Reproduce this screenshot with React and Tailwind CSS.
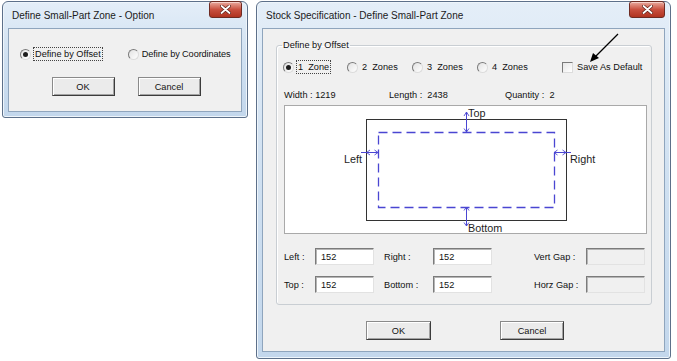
import React from 'react';

// Vista-style close button (red, white X)
function CloseButton({ width }) {
    return (
        <div
            className={`mt-[-1px] h-[17px] ${width} shrink-0 rounded-[3px] border border-[#6e2b22] bg-gradient-to-b from-[#e8a99e] via-[#c9503f] to-[#b0331f] flex items-center justify-center shadow-[inset_0_1px_0_#f4cfc8]`}
        >
            <svg width="11" height="9" viewBox="0 0 11 9">
                <path d="M1.5 1 L9.5 8 M9.5 1 L1.5 8" stroke="#5a1d14" strokeWidth="3.2" strokeLinecap="round" />
                <path d="M1.5 1 L9.5 8 M9.5 1 L1.5 8" stroke="#ffffff" strokeWidth="1.8" strokeLinecap="round" />
            </svg>
        </div>
    );
}

function Window({ title, className, closeWidth, children }) {
    return (
        <div
            className={`relative flex flex-col rounded-t-[6px] rounded-b-[3px] border border-[#5d708a] bg-gradient-to-b from-[#e4eef8] via-[#cfe0f1] to-[#c3d7ec] shadow-[inset_0_0_0_1px_#eef5fb] ${className}`}
        >
            <div className="flex h-[26px] shrink-0 items-start justify-between pl-[9px] pr-[5px]">
                <span className="pt-[8px] text-[10px] leading-[12px] text-[#1b1b1b]">{title}</span>
                <CloseButton width={closeWidth} />
            </div>
            {children}
        </div>
    );
}

function Radio({ checked }) {
    return (
        <span className="inline-flex h-[11px] w-[11px] shrink-0 items-center justify-center rounded-full border border-t-[#7a7a7a] border-l-[#7a7a7a] border-r-[#dcdcdc] border-b-[#dcdcdc] bg-gradient-to-br from-[#e2e2e2] to-[#ffffff]">
            {checked && <span className="h-[5px] w-[5px] rounded-full bg-[#1c1c1c]" />}
        </span>
    );
}

function Checkbox() {
    return (
        <span className="inline-block h-[11px] w-[11px] shrink-0 border border-t-[#7a7a7a] border-l-[#7a7a7a] border-r-[#dcdcdc] border-b-[#dcdcdc] bg-gradient-to-br from-[#e6e6e6] to-[#ffffff]" />
    );
}

function Button({ children, className = '' }) {
    return (
        <div
            className={`flex h-[19px] items-center justify-center border border-t-[#8a8a8a] border-l-[#8a8a8a] border-r-[#3c3c3c] border-b-[#3c3c3c] bg-[#ebebeb] shadow-[inset_1px_1px_0_#ffffff,inset_-1px_-1px_0_#a3a3a3] ${className}`}
        >
            {children}
        </div>
    );
}

function Field({ value, disabled }) {
    return (
        <div
            className={`flex h-[17px] w-[59px] shrink-0 items-center border border-t-[#7b7b7b] border-l-[#7b7b7b] border-r-[#e2e2e2] border-b-[#e2e2e2] px-[5px] shadow-[inset_1px_1px_0_#b5b5b5] ${disabled ? 'bg-[#f0f0f0]' : 'bg-white'}`}
        >
            {value}
        </div>
    );
}

function ZoneDiagram() {
    const blue = '#4a46d2';
    return (
        <svg width="361" height="127" viewBox="0 0 361 127">
            <rect x="81.5" y="13.5" width="200" height="101" fill="none" stroke="#333" strokeWidth="1" />
            <rect x="93.5" y="26.5" width="176" height="75" fill="none" stroke={blue} strokeWidth="1.3" strokeDasharray="9 5" />

            {/* top */}
            <path d="M181.5 6 V26" stroke={blue} strokeWidth="1" />
            <path d="M179 10 L181.5 6 L184 10 M179 22.5 L181.5 26 L184 22.5" stroke={blue} strokeWidth="0.9" fill="none" />
            {/* bottom */}
            <path d="M181.5 101 V120" stroke={blue} strokeWidth="1" />
            <path d="M179 104.5 L181.5 101 L184 104.5 M179 116.5 L181.5 120 L184 116.5" stroke={blue} strokeWidth="0.9" fill="none" />
            {/* left */}
            <path d="M76 46.5 H93" stroke={blue} strokeWidth="1" />
            <path d="M85 44 L81.5 46.5 L85 49 M89.5 44 L93 46.5 L89.5 49" stroke={blue} strokeWidth="0.9" fill="none" />
            {/* right */}
            <path d="M269 46.5 H286" stroke={blue} strokeWidth="1" />
            <path d="M272.5 44 L269 46.5 L272.5 49 M277.5 44 L281 46.5 L277.5 49" stroke={blue} strokeWidth="0.9" fill="none" />

            <g fontFamily="'Liberation Sans', Arial, sans-serif" fontSize="10.8" fill="#1e1e1e">
                <text x="183" y="11">Top</text>
                <text x="59" y="57">Left</text>
                <text x="285" y="57">Right</text>
                <text x="183" y="126">Bottom</text>
            </g>
        </svg>
    );
}

export default function App() {
    return (
        <div className="flex h-[361px] w-[677px] items-start overflow-hidden bg-white font-['Liberation_Sans',Arial,sans-serif] text-[9.2px] leading-[12px] text-[#111]">
            {/* Option dialog */}
            <Window title="Define Small-Part Zone - Option" className="ml-[2px] mt-[1px] h-[117px] w-[246px]" closeWidth="w-[33px]">
                <div className="mx-[5px] mb-[5px] flex flex-1 flex-col border border-[#8fa5bd] bg-[#f0f0f0]">
                    <div className="mt-[18px] flex items-center pl-[11px]">
                        <Radio checked />
                        <span className="ml-[2px] border border-dotted border-[#444] px-[1px]">Define by Offset</span>
                        <span className="ml-[25px] flex items-center">
                            <Radio />
                            <span className="ml-[3px] tracking-[-0.1px]">Define by Coordinates</span>
                        </span>
                    </div>
                    <div className="mt-[16px] flex justify-center gap-[23px] pl-[2px]">
                        <Button className="w-[63px]">OK</Button>
                        <Button className="w-[63px]">Cancel</Button>
                    </div>
                </div>
            </Window>

            {/* Zone specification dialog */}
            <Window title="Stock Specification - Define Small-Part Zone" className="ml-[8px] mt-[1px] h-[358px] w-[415px]" closeWidth="w-[36px]">
                <div className="mx-[5px] mb-[6px] flex flex-1 flex-col border border-[#8fa5bd] bg-[#f0f0f0] pl-[13px] pr-[12px] pt-[10px]">
                    <fieldset className="rounded-[3px] border border-[#c9ced3] pb-[11px] pl-[6px] shadow-[inset_1px_1px_0_#ffffff]">
                        <legend className="-ml-[1px] px-[1px] leading-[12px]">Define by Offset</legend>

                        <div className="mt-[9px] flex h-[14px] items-center">
                            <div className="flex w-[64px] items-center">
                                <Radio checked />
                                <span className="ml-[2px] border border-dotted border-[#444] px-[1px]">1&nbsp; Zone</span>
                            </div>
                            <div className="flex w-[65px] items-center">
                                <Radio />
                                <span className="ml-[4px]">2&nbsp; Zones</span>
                            </div>
                            <div className="flex w-[65px] items-center">
                                <Radio />
                                <span className="ml-[4px]">3&nbsp; Zones</span>
                            </div>
                            <div className="flex w-[85px] items-center">
                                <Radio />
                                <span className="ml-[4px]">4&nbsp; Zones</span>
                            </div>
                            <div className="flex items-center">
                                <Checkbox />
                                <span className="ml-[4px]">Save As Default</span>
                            </div>
                        </div>

                        <div className="mt-[14px] flex h-[14px] items-center pl-[1px]">
                            <span className="w-[105px]">Width : 1219</span>
                            <span className="w-[116px]">Length : &nbsp;2438</span>
                            <span>Quantity : &nbsp;2</span>
                        </div>

                        <div className="mt-[3px] ml-[1px] h-[129px] w-[363px] border border-[#a9a9a9] bg-white">
                            <ZoneDiagram />
                        </div>

                        <div className="mt-[14px] flex items-center pl-[1px]">
                            <span className="w-[31px]">Left :</span>
                            <Field value="152" />
                            <span className="ml-[10px] w-[49px]">Right :</span>
                            <Field value="152" />
                            <span className="ml-[42px] w-[52px]">Vert Gap :</span>
                            <Field disabled />
                        </div>
                        <div className="mt-[11px] flex items-center pl-[1px]">
                            <span className="w-[31px]">Top :</span>
                            <Field value="152" />
                            <span className="ml-[10px] w-[49px]">Bottom :</span>
                            <Field value="152" />
                            <span className="ml-[42px] w-[52px]">Horz Gap :</span>
                            <Field disabled />
                        </div>
                    </fieldset>

                    <div className="mt-[16px] flex justify-center gap-[69px] pl-[2px]">
                        <Button className="w-[65px]">OK</Button>
                        <Button className="w-[64px]">Cancel</Button>
                    </div>
                </div>

                {/* annotation arrow pointing at "Save As Default" */}
                <svg className="pointer-events-none absolute left-[330px] top-[30px]" width="34" height="32" viewBox="0 0 34 32">
                    <path d="M31 2 L6 27" stroke="#000" strokeWidth="1.2" />
                    <path d="M3 30 L6 21 L12 26 Z" fill="#000" />
                </svg>
            </Window>
        </div>
    );
}
